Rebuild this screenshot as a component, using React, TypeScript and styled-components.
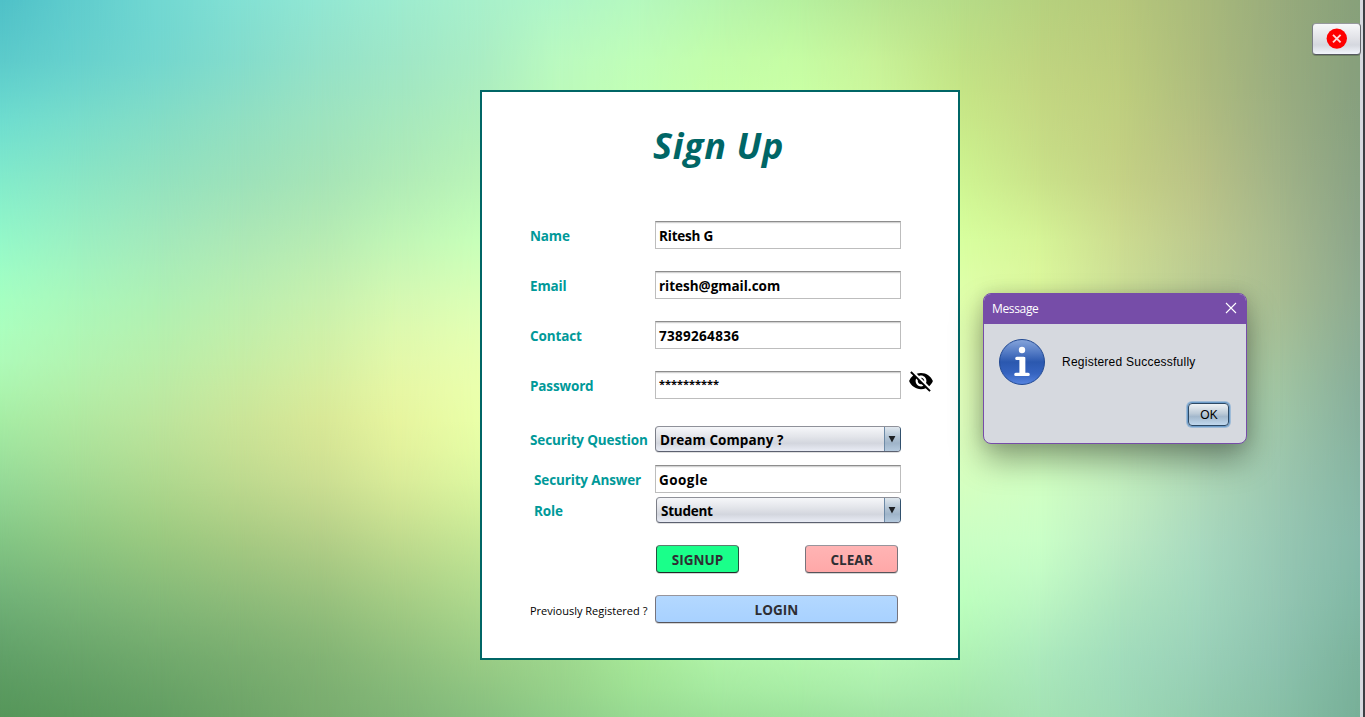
import React from "react";
import styled, { createGlobalStyle } from "styled-components";
import { MdVisibilityOff } from "react-icons/md";

const GlobalStyle = createGlobalStyle`
  * { box-sizing: border-box; }
  html, body { margin: 0; padding: 0; overflow: hidden; }
  button, input { font: inherit; }
`;

/* Backdrop: a table of colours on a loose grid, smoothed with cubic curves in both
   directions and drawn as vertical columns, each fading in from the one on its left. */
type Rgb = number[];
type Column = { x: number; stops: Rgb[] };

const SIDE = [0, 60, 120, 180, 240, 300, 360, 420, 480, 540, 600, 660, 717];
const MID = [0, 90, 660, 717];
const RIGHT = [0, 90, 180, 240, 300, 400, 480, 540, 600, 660, 717];
const STEP = 80;

const SWATCHES: [number, number[], string][] = [
  [0, SIDE, "4FC1C8 5CCBCB 6EDDCF 82EBCB 94F8C9 A6FFC2 AEFBB9 A6EDA5 96DB98 83C685 70B177 60A067 559659"],
  [160, SIDE, "72D8D2 74D7CE 84DDC6 93E2BF A3E9BB AFF0B4 B9EEAA BCE59D AFD98F 9AC980 84B978 70A96C 629E62"],
  [320, SIDE, "92E7D3 94E2C9 9DE3BF A6E4B7 B6EBB3 C7F0AE D3EFA4 D8E897 CBDE92 B2CE87 97C07D 82B374 78AC6E"],
  [480, SIDE, "A8F0CB AAEDC4 B0EFBC BAF4B8 C7FFB9 DBFFB6 E8FFB0 E9FFA8 DDF7A0 C6E795 AFD98D 99CB85 86BF7F"],
  [560, MID, "B0F6C8 BCFABC 9DD68D 8FCD88"],
  [640, MID, "B5F8BE C2FFB5 A6E898 97DA92"],
  [720, MID, "B6F5AE C6FFA9 AFF2A8 9BE098"],
  [800, MID, "B6F09F C9FFA5 B2F5AD 9CE29C"],
  [880, MID, "B7E592 CBF59A B5F6B4 A0E2A3"],
  [960, RIGHT, "B6DC88 C5E586 CFF592 D8FF9F E0FFAC E2FFBC D6FFC0 CBFFC4 BDFFBE AFF2B4 A0E2A8"],
  [1050, RIGHT, "B6D07D C2D581 C9E089 D5F296 DBF59E D4FAB4 CFFFC2 C9FFC7 BCF5C3 ABE8BD A3E2B4"],
  [1140, RIGHT, "B5C57B BBCB7D C3CE85 C9D68F C6DA98 C0E5B0 BFEABD B8E6C2 A9E0BD 9FD9BB 9AD6B4"],
  [1230, RIGHT, "A2B47B A7B57F B2BC87 B5C38E B2C595 ABCDA8 A6D0B4 A2D3BC 9DD2BB 96CCB5 8EC7AB"],
  [1300, RIGHT, "94A87C 95AA80 9AAF87 A0B58D A2B991 9BC2A3 97C3AD 93C3AF 8FC1AE 88BEAA 84BCA3"],
  [1360, RIGHT, "87A07A 869F7D 89A284 8BA58A 8CAA90 87AE9B 86B5A3 85B8A8 80B7A4 7BB29C 77AF98"],
];

const parse = (hex: string): Rgb => [0, 2, 4].map((i) => parseInt(hex.slice(i, i + 2), 16));

function curve(xs: number[], vs: Rgb[], x: number): Rgb {
  const last = xs.length - 1;
  let i = 0;
  while (i < last - 1 && x > xs[i + 1]) i++;
  const h = xs[i + 1] - xs[i];
  const t = (x - xs[i]) / h;
  const slope = (k: number, c: number) => {
    const a = Math.max(0, k - 1);
    const b = Math.min(last, k + 1);
    return (vs[b][c] - vs[a][c]) / (xs[b] - xs[a]);
  };
  return [0, 1, 2].map((c) => {
    const v =
      (2 * t ** 3 - 3 * t ** 2 + 1) * vs[i][c] +
      (t ** 3 - 2 * t ** 2 + t) * h * slope(i, c) +
      (3 * t ** 2 - 2 * t ** 3) * vs[i + 1][c] +
      (t ** 3 - t ** 2) * h * slope(i + 1, c);
    return Math.max(0, Math.min(255, v));
  });
}

const YS = Array.from({ length: 25 }, (_, i) => i * 30);
const KNOTS = SWATCHES.map(([x, ys, colors]) => {
  const values = colors.split(" ").map(parse);
  return { x, stops: YS.map((y) => curve(ys, values, Math.min(y, 717))) };
});
const KNOT_XS = KNOTS.map((k) => k.x);
const COLUMNS: Column[] = Array.from({ length: 18 }, (_, i) => i * STEP).map((x) => ({
  x,
  stops: YS.map((_, row) => curve(KNOT_XS, KNOTS.map((k) => k.stops[row]), x)),
}));

const stopList = (column: Column) =>
  column.stops.map((c, i) => `rgb(${c.map((v) => v.toFixed(1)).join(" ")}) ${YS[i]}px`).join(", ");

const Screen = styled.div`
  display: grid;
  grid-template-columns: 1360px 3px 2px;
  width: 1365px;
  height: 717px;
  overflow: hidden;
  font-family: "Open Sans", "Noto Sans", sans-serif;
  color: #000;
`;

const Stage = styled.main`
  position: relative;
  display: grid;
  grid-template: 717px / 1360px;
`;

const Layer = styled.div<{ $column: Column }>`
  grid-area: 1 / 1;
  background: linear-gradient(to bottom, ${(p) => stopList(p.$column)});
  mask-image: ${(p) =>
    p.$column.x === 0
      ? "none"
      : `linear-gradient(to right, transparent ${p.$column.x - STEP}px, #000 ${p.$column.x}px)`};
`;

const FrameEdge = styled.div<{ $color: string }>`
  background: ${(p) => p.$color};
`;

const Content = styled.div`
  grid-area: 1 / 1;
  position: relative;
  display: flex;
  justify-content: space-between;
  align-items: flex-start;
  padding: 23px 0 0 480px;
`;

const Panel = styled.form`
  width: 480px;
  height: 570px;
  margin-top: 67px;
  padding: 0 0 0 48px;
  border: 2px solid #006666;
  background: #fff;
`;

const Title = styled.h1`
  margin: 0;
  padding: 27px 0 0 123px;
  height: 83px;
  line-height: 54px;
  font-size: 36px;
  font-style: italic;
  font-weight: 700;
  letter-spacing: 0.65px;
  color: #006666;
  white-space: nowrap;
`;

const Row = styled.div<{ $top: number; $height: number }>`
  display: grid;
  grid-template-columns: 125px 246px 1fr;
  align-items: stretch;
  height: ${(p) => p.$height}px;
  margin-top: ${(p) => p.$top}px;
`;

const Label = styled.label<{ $indent?: number; $drop?: number }>`
  padding: ${(p) => p.$drop ?? 1}px 0 0 ${(p) => p.$indent ?? 0}px;
  line-height: 29px;
  font-size: 13.5px;
  font-weight: 700;
  letter-spacing: -0.14px;
  color: #009999;
  white-space: nowrap;
`;

const Field = styled.div<{ $spacing?: number; $masked?: boolean }>`
  height: 28px;
  padding: ${(p) => (p.$masked ? 0 : 1)}px 0 0 3px;
  border: 1px solid #bdbdbd;
  border-top-color: #8d8d8d;
  box-shadow: inset 0 1px 0 #d3d3d3, inset 0 2px 0 #f5f5f5;
  background: #fff;
  line-height: ${(p) => (p.$masked ? 24 : 27)}px;
  font-size: ${(p) => (p.$masked ? 11 : 13.5)}px;
  font-weight: 700;
  letter-spacing: ${(p) => p.$spacing ?? 0}px;
  white-space: nowrap;
`;

const Combo = styled.div<{ $inset?: number; $spacing?: number }>`
  display: grid;
  grid-template-columns: 1fr 16px;
  height: 26px;
  margin-left: ${(p) => p.$inset ?? 0}px;
  border: 1px solid;
  border-color: #8f9199 #31506d #5c6170 #7c7f88;
  border-radius: 4px;
  box-shadow: 0 1px 0 rgba(0, 0, 0, 0.12);
  background: linear-gradient(#f6f7fa, #e3e5ea 40%, #d3d6de 68%, #e9ecf5);
  overflow: hidden;
  font-size: 13.5px;
  font-weight: 700;
  line-height: 27px;
  letter-spacing: ${(p) => p.$spacing ?? 0}px;
  white-space: nowrap;
`;

const ComboText = styled.span`
  padding-left: 4px;
`;

const ComboArrow = styled.span`
  display: flex;
  justify-content: center;
  padding: 9px 1px 0 0;
  border-left: 1px solid #6d8aa6;
  background: linear-gradient(#dfe7ee, #b0c2d3 40%, #9fb4c9 60%, #bdd2e6);
`;

const Eye = styled.span`
  display: flex;
  align-items: flex-start;
  margin: -3px 0 0 7px;
`;

const Actions = styled.div`
  display: flex;
  justify-content: space-between;
  width: 242px;
  margin: 22px 0 0 126px;
`;

const Button = styled.button<{ $width: number; $fill: string; $dark?: boolean }>`
  width: ${(p) => p.$width}px;
  height: 28px;
  padding: 2px 0 0;
  border: 1px solid;
  border-color: ${(p) =>
    p.$dark ? "#5d7d6d #24533f #1f2a28 #24533f" : "#97959c #77747c #56545a #77747c"};
  border-radius: 4px;
  box-shadow: 0 1px 0 rgba(0, 0, 0, 0.17);
  background: ${(p) => p.$fill};
  line-height: 24px;
  font-size: 13.5px;
  font-weight: 700;
  letter-spacing: 0.04px;
  color: #2e2e33;
`;

const LoginRow = styled.div`
  display: grid;
  grid-template-columns: 125px 243px;
  margin-top: 22px;
`;

const Hint = styled.span`
  padding-top: 2px;
  line-height: 28px;
  font-size: 11px;
  white-space: nowrap;
`;

const CloseButton = styled.button`
  display: flex;
  align-items: center;
  justify-content: center;
  width: 49px;
  height: 32px;
  margin-right: -1px;
  padding: 0 0 1px 0;
  border: 1px solid;
  border-color: #96989d #63666d #565960 #7b7e85;
  border-radius: 4px;
  box-shadow: 0 1px 0 rgba(0, 0, 0, 0.2);
  background: linear-gradient(#f7f8fa, #e2e3e8 45%, #d5d8df 70%, #f2f5fc);
`;

const Dialog = styled.section`
  position: absolute;
  left: 983px;
  top: 293px;
  width: 264px;
  height: 151px;
  border: 1px solid #764da8;
  border-radius: 8px;
  background: #d6d9df;
  box-shadow: 0 16px 32px rgba(0, 0, 0, 0.36), 0 0 16px rgba(0, 0, 0, 0.12);
  overflow: hidden;
`;

const DialogBar = styled.header`
  display: flex;
  align-items: center;
  justify-content: space-between;
  height: 30px;
  padding: 0 9px 2px 8px;
  background: #764da8;
  color: #fff;
  font-size: 12px;
  letter-spacing: -0.35px;
`;

const DialogBody = styled.div`
  display: flex;
  align-items: center;
  gap: 15px;
  height: 48px;
  margin: 14px 0 0 15px;
`;

const DialogText = styled.span`
  font-family: "Liberation Sans", Arial, sans-serif;
  font-size: 12px;
  letter-spacing: 0.24px;
  white-space: nowrap;
`;

const DialogFooter = styled.footer`
  display: flex;
  justify-content: flex-end;
  padding: 17px 17px 0 0;
`;

const OkButton = styled.button`
  width: 41px;
  height: 23px;
  padding: 1px 0 0 1px;
  border: 1px solid #2c4965;
  border-radius: 4px;
  box-shadow: 0 0 0 1px #6d9cc9, 0 0 0 2px rgba(115, 164, 209, 0.55);
  background: linear-gradient(#eef2f5, #bccad7 45%, #a3b8cc 60%, #c0d8ee);
  font-family: "Liberation Sans", Arial, sans-serif;
  font-size: 12px;
  line-height: 20px;
  color: #000;
`;

const ArrowGlyph = () => (
  <svg width="8" height="7" viewBox="0 0 8 7">
    <path d="M0.6 0H7.4L4 6.4Z" fill="#1d2024" />
  </svg>
);

const InfoIcon = () => (
  <svg width="48" height="48" viewBox="0 0 48 48">
    <defs>
      <linearGradient id="infoFill" x1="0" y1="0" x2="0" y2="1">
        <stop offset="0" stopColor="#86a5db" />
        <stop offset="0.3" stopColor="#5078c3" />
        <stop offset="0.5" stopColor="#2b58af" />
        <stop offset="0.75" stopColor="#3563bf" />
        <stop offset="1" stopColor="#5684e0" />
      </linearGradient>
    </defs>
    <circle cx="23" cy="24" r="22.5" fill="url(#infoFill)" stroke="#234a92" />
    <circle cx="23" cy="12" r="3.2" fill="#fff" />
    <path
      d="M17.8 20.4H24.6V35M16.8 36.4H29.2"
      fill="none"
      stroke="#fff"
      strokeWidth="3.2"
      strokeLinecap="round"
      strokeLinejoin="round"
    />
    <path d="M20.4 19H26.2V37H20.4Z" fill="#fff" />
  </svg>
);

export default function App() {
  return (
    <Screen>
      <GlobalStyle />
      <Stage>
        {COLUMNS.map((c) => (
          <Layer key={c.x} $column={c} />
        ))}
        <Content>
          <Panel>
            <Title>Sign Up</Title>
            <Row $top={46} $height={28}>
              <Label>Name</Label>
              <Field $spacing={-0.2}>Ritesh G</Field>
            </Row>
            <Row $top={22} $height={28}>
              <Label>Email</Label>
              <Field $spacing={-0.02}>ritesh@gmail.com</Field>
            </Row>
            <Row $top={22} $height={28}>
              <Label>Contact</Label>
              <Field $spacing={0.3}>7389264836</Field>
            </Row>
            <Row $top={22} $height={28}>
              <Label>Password</Label>
              <Field $masked>**********</Field>
              <Eye>
                <MdVisibilityOff size={26} />
              </Eye>
            </Row>
            <Row $top={27} $height={26}>
              <Label $drop={0}>Security Question</Label>
              <Combo $spacing={0.07}>
                <ComboText>Dream Company ?</ComboText>
                <ComboArrow><ArrowGlyph /></ComboArrow>
              </Combo>
            </Row>
            <Row $top={13} $height={28}>
              <Label $indent={4}>Security Answer</Label>
              <Field $spacing={0.45}>Google</Field>
            </Row>
            <Row $top={4} $height={26}>
              <Label $indent={4} $drop={0}>Role</Label>
              <Combo $inset={1} $spacing={-0.25}>
                <ComboText>Student</ComboText>
                <ComboArrow><ArrowGlyph /></ComboArrow>
              </Combo>
            </Row>
            <Actions>
              <Button type="button" $width={83} $fill="#1aff8a" $dark>SIGNUP</Button>
              <Button type="button" $width={93} $fill="linear-gradient(#ffb4b4, #ffa8a8)">CLEAR</Button>
            </Actions>
            <LoginRow>
              <Hint>Previously Registered ?</Hint>
              <Button type="button" $width={243} $fill="linear-gradient(#b3d8ff, #a8d1ff)">LOGIN</Button>
            </LoginRow>
          </Panel>
          <CloseButton type="button" aria-label="Close">
            <svg width="22" height="22" viewBox="0 0 22 22">
              <circle cx="10.8" cy="10.6" r="10.2" fill="#fe0000" />
              <path d="M7 6.8L14.6 14.4M14.6 6.8L7 14.4" stroke="#ffd9d9" strokeWidth="1.9" />
            </svg>
          </CloseButton>
        </Content>
        <Dialog>
          <DialogBar>
            <span>Message</span>
            <svg width="12" height="12" viewBox="0 0 12 12">
              <path d="M1 1L11 11M11 1L1 11" stroke="#fff" strokeWidth="1.1" />
            </svg>
          </DialogBar>
          <DialogBody>
            <InfoIcon />
            <DialogText>Registered Successfully</DialogText>
          </DialogBody>
          <DialogFooter>
            <OkButton type="button">OK</OkButton>
          </DialogFooter>
        </Dialog>
      </Stage>
      <FrameEdge $color="#d6d9df" />
      <FrameEdge $color="#3c3f44" />
    </Screen>
  );
}
